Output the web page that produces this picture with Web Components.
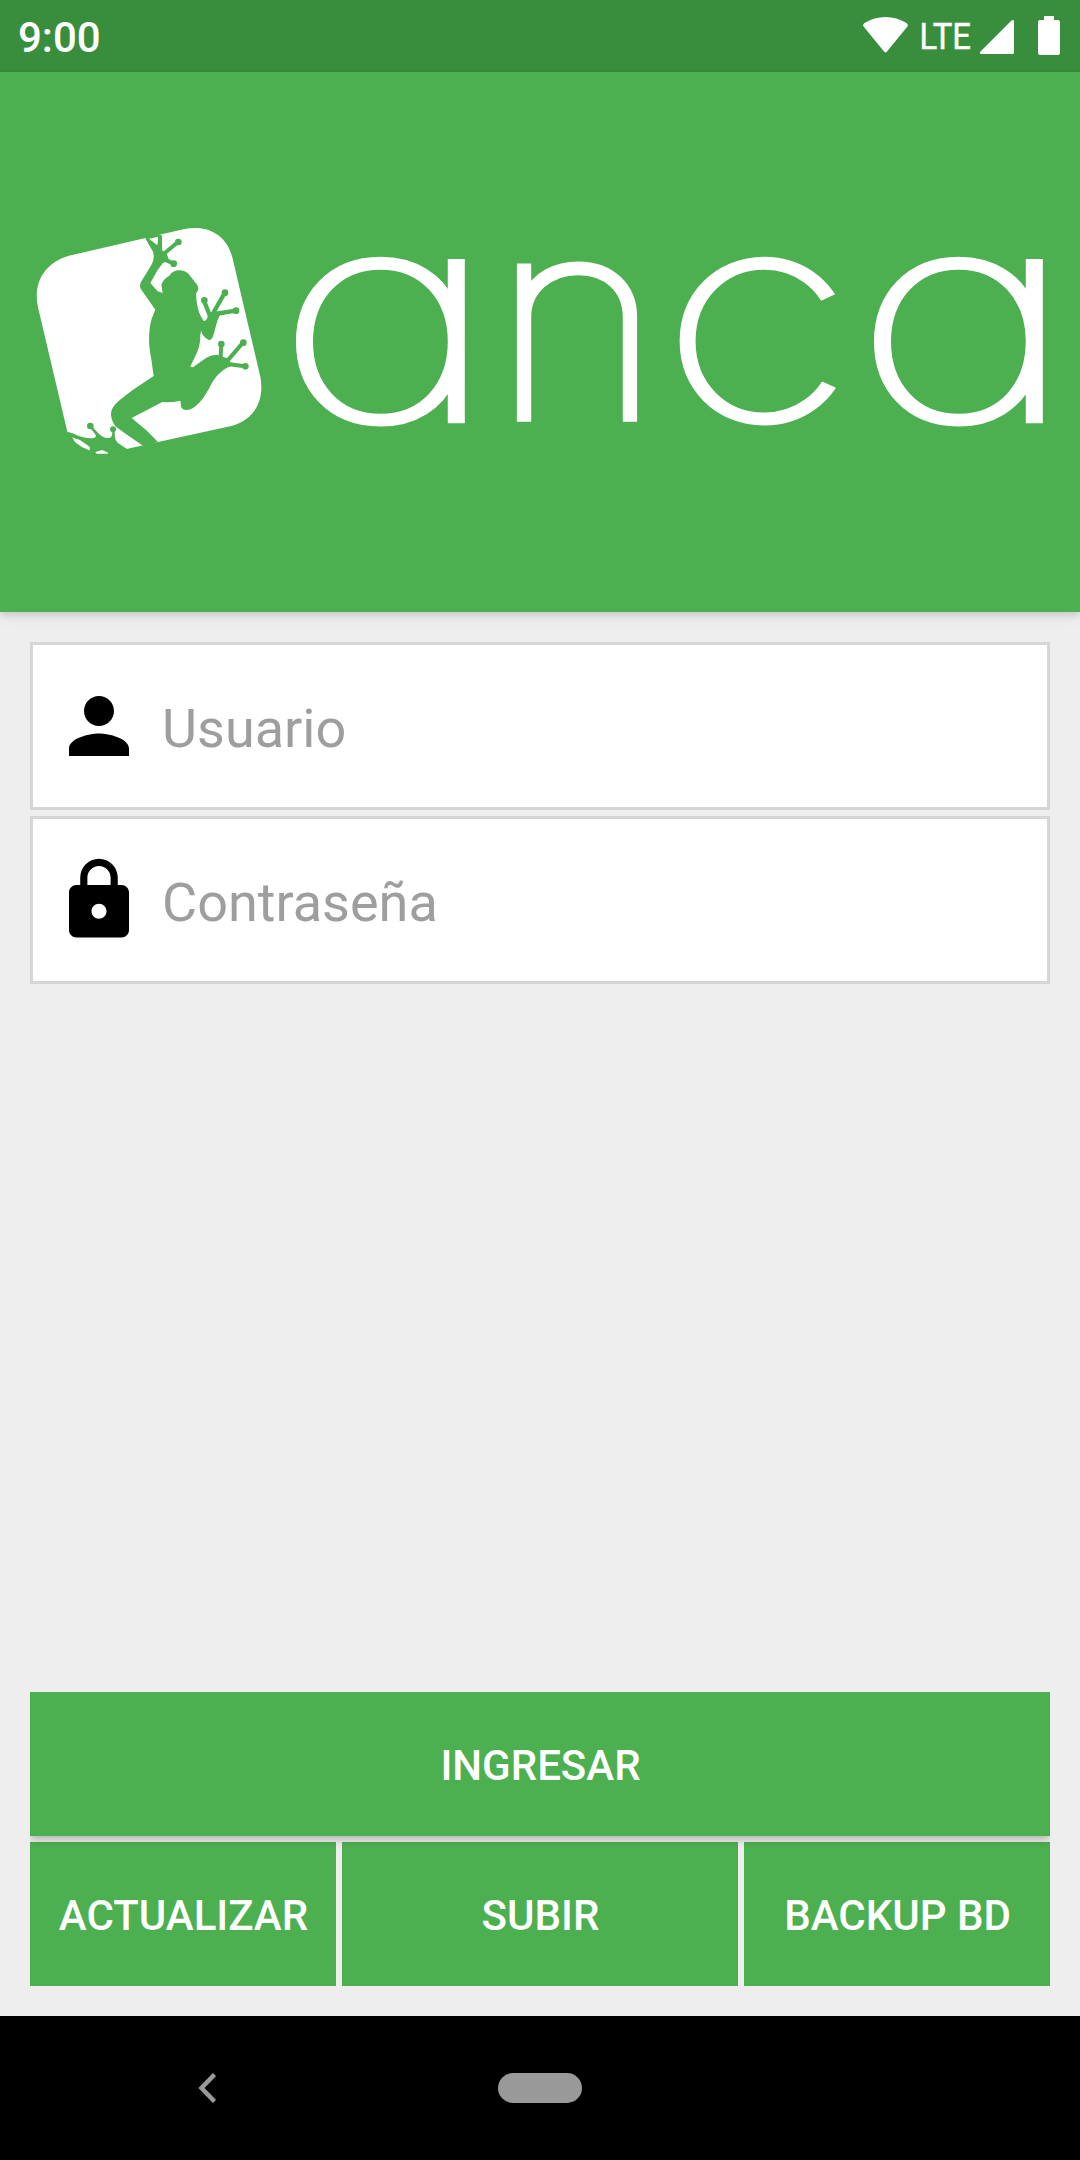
<!DOCTYPE html>
<html lang="es">
<head>
<meta charset="utf-8">
<title>anca</title>
<style>
    body {
        margin: 0;
        font-family: Roboto, sans-serif;
        background: #eee;
    }
</style>
</head>
<body>
<login-screen></login-screen>

<script>
const makeTemplate = (html) => {
    const template = document.createElement("template");
    template.innerHTML = html;
    return template;
};

// Base class, attaches the shadow root and clones the template into it
class BaseComponent extends HTMLElement {
    constructor() {
        super();
        this.attachShadow({ mode: "open" });
        this.shadowRoot.appendChild(this.constructor.template.content.cloneNode(true));
    }
}

class StatusBar extends BaseComponent {
    static template = makeTemplate(`
        <style>
            :host {
                display: flex;
                align-items: center;
                justify-content: space-between;
                box-sizing: border-box;
                height: 72px;
                padding: 0 20px 0 18px;
                background: #388e3c;
                color: #fff;
            }
            .time { font-size: 42px; font-weight: 500; line-height: 72px; padding-top: 3px; }
            svg { display: block; fill: #fff; }
        </style>
        <span class="time"><slot></slot></span>
        <svg width="200" height="72" viewBox="860 0 200 72">
            <path d="M864 27Q862 25 864.500 23Q874 17 885.500 17Q897 17 906.500 23Q909 25 907 27L887 51.500Q885.500 53.500 884 51.500Z"/>
            <text x="919.500" y="49" font-size="37.500" textLength="51.500" lengthAdjust="spacingAndGlyphs" stroke="#fff" stroke-width=".5">LTE</text>
            <path d="M1014 21.500V52.500Q1014 54 1012.500 54H981.500Q979 54 980.500 51.500L1011.500 20.500Q1014 19 1014 21.500Z"/>
            <path d="M1044 16H1054V20H1058Q1060 20 1060 22V53Q1060 55 1058 55H1040Q1038 55 1038 53V22Q1038 20 1040 20H1044Z"/>
        </svg>
    `);
}

class FrogLogo extends BaseComponent {
    static template = makeTemplate(`
        <style>
            :host { display: block; width: 250px; height: 260px; }
            svg { display: block; }
            .frog { fill: #4caf50; }
            .toes { stroke: #4caf50; stroke-linecap: round; fill: none; }
        </style>
        <svg width="250" height="260" viewBox="0 0 750 780">
            <path fill="#fff" d="M147 137L490 58C563 42 620 75 637 142L721 500C734 568 706 628 634 648L414 696L320 717L262 731H230L205 720L158 684L142 665L54 292C38 218 75 157 147 137Z"/>
            <path class="frog" d="M377 87L374 80L416 70V79H424L427 122L439 128L447 150L428 160L413 180L391 219L412 243L428 249L424 224Q431 206 448 197Q459 182 474 181Q491 178 504 190L529 221Q537 230 534 241L528 251Q530 294 542 318L551 333Q561 334 564 316L575 306L600 316C588 336 586 362 578 382Q573 392 565 389Q549 381 543 362L541 375C541 407 533 425 523 445L511 469Q516 475 525 467C549 451 568 432 592 435L628 447L634 468C602 479 583 504 568 534C550 566 526 600 500 600Q485 600 483 588L481 572Q455 578 427 576L335 624L379 661L414 696L370 708L322 675L286 649Q268 623 275 600C284 578 315 559 337 541L401 498L393 442C385 404 385 362 395 326L406 299L362 236Q358 226 363 216L394 165Q405 147 399 125Z"/>
            <path fill="#fff" d="M387 86L415 80L412 106Z"/>
            <g class="toes">
                <path stroke-width="12" d="M430 133L473 97M425 145L460 160M420 80V125"/>
                <path stroke-width="13" d="M570 318L552 272M578 312L614 249M584 312L648 302"/>
                <path stroke-width="12" d="M601 452L604 405M620 455L669 398M622 462L675 469"/>
            </g>
            <g class="frog">
                <circle cx="475" cy="96" r="10"/>
                <circle cx="461" cy="161" r="10"/>
                <circle cx="553" cy="271" r="10"/>
                <circle cx="615" cy="248" r="10"/>
                <circle cx="648" cy="302" r="10"/>
                <circle cx="604" cy="402" r="10"/>
                <circle cx="670" cy="398" r="10"/>
                <circle cx="676" cy="469" r="10"/>
                <circle cx="211" cy="648" r="10"/>
                <circle cx="279" cy="658" r="9"/>
                <path d="M142 665L162 671Q192 687 222 684Q234 680 221 667L207 650L215 648L235 670Q250 686 267 684Q278 684 277 659H284Q283 692 294 699L322 718L264 734V728L247 720L226 726L230 733L205 724L210 712L197 705L157 682L155 691Z"/>
            </g>
            <path fill="#fff" d="M158 683L180 690L209 710V721L185 711L164 695Z"/>
        </svg>
    `);
}

class BrandHeader extends BaseComponent {
    static template = makeTemplate(`
        <style>
            :host {
                display: flex;
                align-items: center;
                height: 540px;
                box-sizing: border-box;
                padding: 0 0 4px 20px;
                background: #4caf50;
                box-shadow: 0 3px 6px rgba(0, 0, 0, .12), 0 6px 14px rgba(0, 0, 0, .05);
                position: relative;
            }
            .name {
                fill: #fff;
                stroke: #fff;
                stroke-width: 6.500px;
                font: 100 292px Inter, sans-serif;
                font-feature-settings: "cv11";
            }
            .name .narrow { stroke-width: 8px; }
        </style>
        <frog-logo></frog-logo>
        <svg class="name" width="810" height="440" viewBox="270 120 810 440">
            <text transform="translate(276 420) scale(1.305 .990)">a</text>
            <text class="narrow" transform="translate(493 418) scale(.985 .945)">n</text>
            <text transform="translate(661 420) scale(1.220 .990)">c</text>
            <text transform="translate(854 420) scale(1.305 .990)">a</text>
        </svg>
    `);
}

const ICONS = {
    person: "M12 12c2.210 0 4-1.790 4-4s-1.790-4-4-4-4 1.790-4 4 1.790 4 4 4zm0 2c-2.670 0-8 1.340-8 4v2h16v-2c0-2.660-5.330-4-8-4z",
    lock: "M18 8h-1V6c0-2.760-2.240-5-5-5S7 3.240 7 6v2H6c-1.100 0-2 .9-2 2v10c0 1.100.9 2 2 2h12c1.100 0 2-.9 2-2V10c0-1.100-.9-2-2-2zm-6 9c-1.100 0-2-.9-2-2s.9-2 2-2 2 .9 2 2-.9 2-2 2zm3.100-9H8.900V6c0-1.710 1.390-3.100 3.100-3.100s3.100 1.390 3.100 3.100v2z",
};

class IconField extends BaseComponent {
    static template = makeTemplate(`
        <style>
            :host {
                display: flex;
                align-items: center;
                gap: 18px;
                box-sizing: border-box;
                height: 168px;
                padding: 0 21px;
                border: 3px solid #d6d6d6;
                background: #fff;
                color: #9e9e9e;
                font-size: 54px;
            }
            svg { width: 90px; height: 90px; fill: #000; }
            span { padding-top: 4px; }
        </style>
        <svg viewBox="0 0 24 24"><path/></svg>
        <span><slot></slot></span>
    `);

    connectedCallback() {
        const path = this.shadowRoot.querySelector("path");
        path.setAttribute("d", ICONS[this.getAttribute("icon")]);
    }
}

class FlatButton extends BaseComponent {
    static template = makeTemplate(`
        <style>
            :host { display: block; height: 144px; }
            button {
                display: block;
                width: 100%;
                height: 100%;
                padding: 2px 0 0 1px;
                border: 0;
                background: #4caf50;
                color: #fff;
                font: 500 42px Roboto, sans-serif;
            }
            /* only the bottom edge casts a shadow */
            :host([raised]) {
                position: relative;
                z-index: 1;
                box-shadow: 0 3px 9px rgba(0, 0, 0, .28);
                clip-path: inset(0 0 -20px 0);
            }
        </style>
        <button><slot></slot></button>
    `);
}

class NavBar extends BaseComponent {
    static template = makeTemplate(`
        <style>
            :host {
                display: grid;
                grid-template-columns: 1fr 84px 1fr;
                align-items: center;
                height: 144px;
                background: #000;
            }
            svg { margin-left: 198px; fill: none; stroke: #999; stroke-width: 4.500; }
            .home { height: 30px; border-radius: 15px; background: #999; }
        </style>
        <svg width="18" height="30" viewBox="0 0 18 30"><path d="M16.500 1.500L3.500 15L16.500 28.500"/></svg>
        <div class="home"></div>
    `);
}

class LoginScreen extends BaseComponent {
    static template = makeTemplate(`
        <style>
            :host {
                display: flex;
                flex-direction: column;
                width: 1080px;
                height: 2160px;
                background: #eee;
            }
            main {
                flex: 1;
                display: flex;
                flex-direction: column;
                justify-content: space-between;
                padding: 30px;
            }
            .fields, .actions { display: grid; gap: 6px; }
            .row { display: grid; grid-template-columns: 306px 1fr 306px; gap: 6px; }
        </style>
        <status-bar>9:00</status-bar>
        <brand-header></brand-header>
        <main>
            <div class="fields">
                <icon-field icon="person">Usuario</icon-field>
                <icon-field icon="lock">Contraseña</icon-field>
            </div>
            <div class="actions">
                <flat-button raised>INGRESAR</flat-button>
                <div class="row">
                    <flat-button>ACTUALIZAR</flat-button>
                    <flat-button>SUBIR</flat-button>
                    <flat-button>BACKUP BD</flat-button>
                </div>
            </div>
        </main>
        <nav-bar></nav-bar>
    `);
}

window.customElements.define("status-bar", StatusBar);
window.customElements.define("frog-logo", FrogLogo);
window.customElements.define("brand-header", BrandHeader);
window.customElements.define("icon-field", IconField);
window.customElements.define("flat-button", FlatButton);
window.customElements.define("nav-bar", NavBar);
window.customElements.define("login-screen", LoginScreen);
</script>
</body>
</html>
